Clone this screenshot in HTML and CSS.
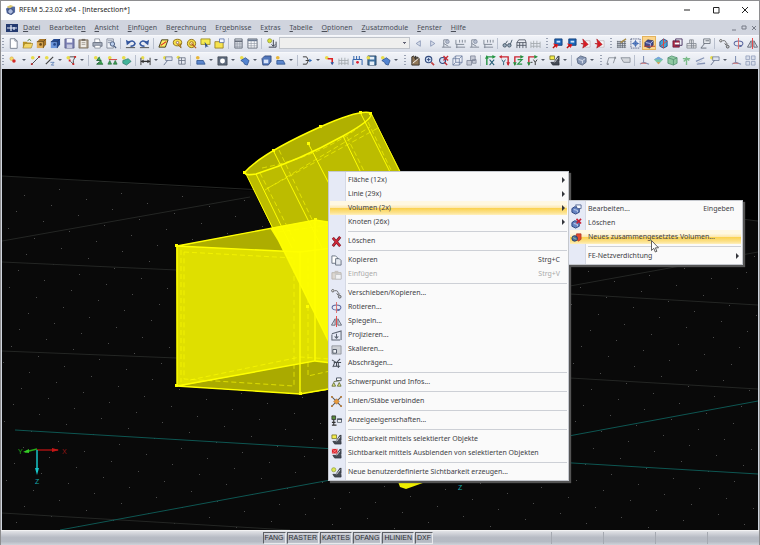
FILE: index.html
```html
<!DOCTYPE html>
<html lang="de">
<head>
<meta charset="utf-8">
<title>RFEM 5.23.02 x64 - [intersection*]</title>
<link rel="stylesheet" href="styles.css">
</head>
<body>
<svg class="sprite" aria-hidden="true">
  <symbol id="i-app" viewBox="0 0 12 12"><path d="M1 4 5 1l6 1v6l-4 3-5-2z" fill="#5068a0"/><path d="M2 2 6 0l3 1-4 3z" fill="#d9c46a"/><circle cx="6" cy="7" r="3" fill="#aab9dd" stroke="#2f4170"/></symbol>
  <symbol id="i-new" viewBox="0 0 12 12"><path d="M2.500.8h5l2.500 2.500v8h-7.500z" fill="#fff" stroke="#6b7383" stroke-width=".9"/><path d="M7.500.8v2.500H10" fill="none" stroke="#6b7383" stroke-width=".8"/></symbol>
  <symbol id="i-open" viewBox="0 0 12 12"><path d="M1 4h4l1 1h4v6H1z" fill="#b89425"/><path d="M1 11 3 6h9l-2 5z" fill="#f2d668" stroke="#94741b" stroke-width=".6"/><path d="M6 3q2-3 4 0" fill="none" stroke="#3b6b31"/></symbol>
  <symbol id="i-box" viewBox="0 0 12 12"><path d="M1 4 4 1h7v6l-3 4H1z" fill="#a87628"/><path d="M1 4h7v7H1z" fill="#e0ad55"/><path d="M1 4h7v7M8 4l3-3" fill="none" stroke="#5d4218" stroke-width=".8"/><circle cx="5" cy="7" r="1.500" fill="#6b4b1a"/></symbol>
  <symbol id="i-boxb" viewBox="0 0 12 12"><path d="M1 4 4 1h7v6l-3 4H1z" fill="#23488f"/><path d="M1 4h7v7H1z" fill="#6d97dc"/><path d="M1 4h7v7M8 4l3-3" fill="none" stroke="#1b3467" stroke-width=".8"/><circle cx="5" cy="7" r="1.500" fill="#25488b"/></symbol>
  <symbol id="i-save" viewBox="0 0 12 12"><path d="M1 1h10v10H1z" fill="#7b80b4" stroke="#515582" stroke-width=".8"/><path d="M3 1h6v4H3z" fill="#f4f5fb"/><path d="M3 7h6v4H3z" fill="#c5c8df"/></symbol>
  <symbol id="i-clip" viewBox="0 0 12 12"><path d="M1 2h10v9H1z" fill="#a99c8a" stroke="#74695b" stroke-width=".8"/><path d="M3 3h6v7H3z" fill="#efece6"/><path d="M4 1h4v2H4z" fill="#71695f"/><path d="M4 5h4M4 7h4" stroke="#8a8378" stroke-width=".7"/></symbol>
  <symbol id="i-print" viewBox="0 0 12 12"><path d="M3 1h5l1 4H3z" fill="#fff" stroke="#6b7383" stroke-width=".7"/><path d="M1 5h10v4H1z" fill="#a7afbd" stroke="#596273" stroke-width=".8"/><path d="M3 8h6v3H3z" fill="#fff" stroke="#6b7383" stroke-width=".7"/></symbol>
  <symbol id="i-preview" viewBox="0 0 12 12"><path d="M1 1h7v10H1z" fill="#eef1f7" stroke="#6b7383" stroke-width=".8"/><path d="M2 3h5M2 5h3" stroke="#8993a6"/><circle cx="7" cy="6.500" r="2.400" fill="#b9cdec" stroke="#475a7c"/><path d="m9 8.500 2 2.500" stroke="#475a7c" stroke-width="1.300"/></symbol>
  <symbol id="i-undo" viewBox="0 0 12 12"><path d="M3 5q6-4 8 1-1 3-5 3" fill="none" stroke="#34579e" stroke-width="1.600"/><path d="m1 2 1 6 4-3z" fill="#34579e"/><path d="M1 10.500h10" stroke="#333" stroke-width=".9"/></symbol>
  <symbol id="i-redo" viewBox="0 0 12 12"><path d="M9 5Q3 1 1 6q1 3 5 3" fill="none" stroke="#34579e" stroke-width="1.600"/><path d="m11 2-1 6-4-3z" fill="#34579e"/><path d="M1 10.500h10" stroke="#333" stroke-width=".9"/></symbol>
  <symbol id="i-plane" viewBox="0 0 12 12"><path d="M4 2h7L8 10H1z" fill="#f8ed66" stroke="#3c3510"/><path d="m3 8 6-4" stroke="#d22" stroke-width="1.200"/></symbol>
  <symbol id="i-talk" viewBox="0 0 12 12"><ellipse cx="6" cy="5" rx="4.600" ry="3.600" fill="#f5df48" stroke="#8a6c12"/><path d="m6 7 4 4-1-5" fill="#d38f23" stroke="#7a5913" stroke-width=".7"/><circle cx="6" cy="5" r="1.300" fill="#fff" stroke="#965"/></symbol>
  <symbol id="i-target" viewBox="0 0 12 12"><circle cx="6" cy="6" r="4.500" fill="#f5df48" stroke="#8a6c12"/><circle cx="6" cy="6" r="2" fill="#fff3a8" stroke="#a06d1c"/><path d="m6 6 5 5" stroke="#b45b21" stroke-width="1.300"/></symbol>
  <symbol id="i-flag" viewBox="0 0 12 12"><path d="M1 1h10v6H1z" fill="#f5ea50" stroke="#8a7a12" stroke-width=".8"/><path d="m5 4 1 7 1.500-2 2 1z" fill="#2e4e86"/></symbol>
  <symbol id="i-folder" viewBox="0 0 12 12"><path d="M1 4h9v7H1z" fill="#f6e34e" stroke="#8a7112" stroke-width=".8"/><path d="M6 1h5v4H6z" fill="#f4f7ff" stroke="#4a62a0" stroke-width=".8"/></symbol>
  <symbol id="i-calc" viewBox="0 0 12 12"><path d="M2 1h8v10H2z" fill="#dde1e8" stroke="#59616f" stroke-width=".9"/><path d="M2 3.500h8" stroke="#59616f" stroke-width="1.500"/><path d="M4.500 4v7M7.500 4v7M2 6.500h8M2 9h8" stroke="#808895" stroke-width=".6"/></symbol>
  <symbol id="i-table" viewBox="0 0 12 12"><path d="M1 1h10v10H1z" fill="#f8f9fb" stroke="#59616f" stroke-width=".9"/><path d="M1 2.500h10" stroke="#68778f" stroke-width="2"/><path d="M4.500 3v8M8 3v8M1 6h10M1 8.500h10" stroke="#929aa6" stroke-width=".7"/></symbol>
  <symbol id="i-load" viewBox="0 0 12 12"><circle cx="4" cy="3" r="2.300" fill="#d6df35" stroke="#798122" stroke-width=".6"/><path d="M3 10h8M8 2v7m-2-2 2 2 2-2M11 4v6" fill="none" stroke="#333a49"/></symbol>
  <symbol id="i-prev" viewBox="0 0 12 12"><path d="M8 3 3.500 6 8 9z" fill="#d8deea" stroke="#7988ac" stroke-width=".8"/></symbol>
  <symbol id="i-next" viewBox="0 0 12 12"><path d="m4 3 4.500 3L4 9z" fill="#d8deea" stroke="#7988ac" stroke-width=".8"/></symbol>
  <symbol id="i-gload" viewBox="0 0 12 12"><path d="M1 10h10M3 10V2h5M3 6l5 3" fill="none" stroke="#7d8593"/><circle cx="7" cy="4" r="2" fill="#b7bfd0" stroke="#747e95" stroke-width=".7"/></symbol>
  <symbol id="i-gdim" viewBox="0 0 12 12"><path d="M1 2v5M5 2v3M8 2v3M11 2v3M2 7v4M1 10h10M1 7h9" fill="none" stroke="#7d8593"/></symbol>
  <symbol id="i-frame" viewBox="0 0 12 12"><path d="M1 11V5h10v6M1 5l2-3h7l1 3M4 5v6M7.500 5v6M1 8h10" fill="none" stroke="#49505e" stroke-width=".9"/></symbol>
  <symbol id="i-gframe" viewBox="0 0 12 12"><path d="M1 11V4M11 11V4M4 3v8M7.500 3v8M1 6h10M1 9h10" fill="none" stroke="#a1a7ac" stroke-width=".9"/></symbol>
  <symbol id="i-glasses" viewBox="0 0 12 12"><circle cx="3" cy="8" r="1.900" fill="#9ab" stroke="#456"/><circle cx="8" cy="8" r="1.900" fill="#9ab" stroke="#456"/><path d="m4 6 2-3m3 4 2-5" stroke="#456"/></symbol>
  <symbol id="i-solid" viewBox="0 0 12 12"><path d="M3 1h8v7H3z" fill="#1c66b7" stroke="#123b76" stroke-width=".9"/><path d="M5 3h4v2H5z" fill="#cfe5fb"/><path d="m1 6 6 1-2 4z" fill="#e22"/><path d="M1 11 5 7" stroke="#b11" stroke-width="1.500"/></symbol>
  <symbol id="i-pdf" viewBox="0 0 12 12"><path d="M6 3h5v7H6z" fill="#f7f7f9" stroke="#b8a9ac" stroke-width=".7"/><path d="m3 1 6 6-6 4 1-4-3-1h3z" fill="#d91c24" stroke="#a5141b" stroke-width=".6"/></symbol>
  <symbol id="i-grid" viewBox="0 0 12 12"><path d="M1 4h10M1 6h10M1 8h10M1 10h10M2 3v8M4.500 3v8M7 3v8M9.500 3v8" stroke="#5b616b" stroke-width=".8"/><path d="m5 5 6-4" stroke="#a68a45" stroke-width="1.500"/></symbol>
  <symbol id="i-snap" viewBox="0 0 12 12"><path d="M1 1v10M11 1v10M1 1h10M1 11h10" stroke="#333e68" stroke-dasharray="1 1"/><circle cx="6" cy="6" r="2" fill="#bcd1f3" stroke="#2b57a7"/><path d="M6 2v8M2 6h8" stroke="#2b57a7" stroke-width=".7"/></symbol>
  <symbol id="i-cubes" viewBox="0 0 12 12"><path d="m1 5 3-3 6 1v5L6 11 1 9z" fill="#424b8e" stroke="#252c52" stroke-width=".7"/><path d="m2 5 5 1v4M7 6l3-3" fill="none" stroke="#bac5ed"/><path d="M0 9h12" stroke="#b63c2e"/></symbol>
  <symbol id="i-cubec" viewBox="0 0 12 12"><path d="M2 4 6 1l4 2v6L6 11 2 9z" fill="#42a5d7" stroke="#1f447c" stroke-width=".9"/><path d="m3 9 7-6M6 1v10" stroke="#e7443c"/></symbol>
  <symbol id="i-cuber" viewBox="0 0 12 12"><path d="M1 3h7v7H1z" fill="#b02a42" stroke="#5e1a40" stroke-width=".8"/><path d="M4 1h7v7H4z" fill="none" stroke="#47315f"/><path d="M3 5h5v2H3z" fill="#fff"/></symbol>
  <symbol id="i-tower" viewBox="0 0 12 12"><path d="M1 11h10V6H8V2H4v4H1zM4 6h4v5M6 2v9M1 8.500h10" fill="#e1e3e6" stroke="#797f88" stroke-width=".8"/></symbol>
  <symbol id="i-note" viewBox="0 0 12 12"><path d="M4 1h7v5H4z" fill="#e8ebef" stroke="#666d78" stroke-width=".9"/><path d="M1 11 5 6M1 11h6M6 3h4" stroke="#666d78"/></symbol>
  <symbol id="i-move" viewBox="0 0 12 12"><circle cx="2" cy="3" r="1.300" fill="#fff" stroke="#555"/><path d="M4 3q4-1 4 4m-2-1 2 2 1.500-2" fill="none" stroke="#555" stroke-width=".9"/><circle cx="9.500" cy="9.500" r="1.500" fill="#c8cbd3" stroke="#555"/></symbol>
  <symbol id="i-rotate" viewBox="0 0 12 12"><ellipse cx="6" cy="6" rx="4.800" ry="2.800" fill="none" stroke="#59659c" stroke-width="1.100"/><path d="M6 0v12" stroke="#db6868"/><path d="m7 7 3 2-3 1z" fill="#59659c"/></symbol>
  <symbol id="i-mirror" viewBox="0 0 12 12"><path d="M4.500 3v7h-4zM7.500 3v7h4z" fill="#d9dbe2" stroke="#555c6b" stroke-width=".9"/><path d="M6 0v12" stroke="#e23c3c"/></symbol>
  <symbol id="i-project" viewBox="0 0 12 12"><path d="M1 4 11 1v10M1 5v6h9M6 4v5m-2-2 2 2 2-2" fill="none" stroke="#5b6371" stroke-width="1.100"/></symbol>
  <symbol id="i-scale" viewBox="0 0 12 12"><path d="M1 2h10v9H1z" fill="#cdd0d5" stroke="#82878e" stroke-width=".8"/><path d="M2 6h4v4H2z" fill="#eef0f4" stroke="#4b5362"/></symbol>
  <symbol id="i-shear" viewBox="0 0 12 12"><path d="m1 2 5 3 4-4M3 5h8M4 5l-2 5M8 5v6M3 9h7M6 5v4" fill="none" stroke="#454b55" stroke-width="1.100"/></symbol>
  <symbol id="i-centroid" viewBox="0 0 12 12"><path d="M6 1h5v3H6z" fill="#fff" stroke="#46505e"/><path d="m1 10 2-4 2 4zM7 10l2-4 2 4zM3 5l6-1" fill="#edf087" stroke="#57622d" stroke-width=".9"/></symbol>
  <symbol id="i-connect" viewBox="0 0 12 12"><path d="m1 1 10 10M11 1 1 11" stroke="#555" stroke-width="1.100"/><path d="m6 3 3 3-3 3-3-3z" fill="#e79b3e" stroke="#a75b17" stroke-width=".6"/><path d="M0 0h2v2H0zM10 0h2v2h-2zM0 10h2v2H0zM10 10h2v2h-2z" fill="#b87f3f"/></symbol>
  <symbol id="i-props" viewBox="0 0 12 12"><path d="M1 1h4v4H1z" fill="#5a8d3c" stroke="#333" stroke-width=".9"/><path d="M3 5v6M1 8h4M1 11h5" stroke="#333" stroke-width="1.200"/><path d="M7 4h4.500v4H7z" fill="#fff" stroke="#35404f" stroke-width=".8"/><path d="M7 5h5" stroke="#35404f"/></symbol>
  <symbol id="i-vis" viewBox="0 0 12 12"><path d="M1 1h5v4H1z" fill="#f5ed4c" stroke="#6b6922" stroke-width=".8"/><path d="M10 1 6 7h5V1M2 8h9v3H4z" fill="#454b55" stroke="#252a33" stroke-width=".7"/><path d="m6 8 4-5" stroke="#dfe2e5"/></symbol>
  <symbol id="i-visx" viewBox="0 0 12 12"><path d="M10 1 6 7h5V1M2 8h9v3H4z" fill="#454b55" stroke="#252a33" stroke-width=".7"/><path d="M1 1h6v5H1z" fill="#d8222c"/><path d="m1 1 6 5m0-5L1 6" stroke="#ff8b8b" stroke-width=".8"/><path d="m6 8 4-5" stroke="#dfe2e5"/></symbol>
  <symbol id="i-visn" viewBox="0 0 12 12"><circle cx="3" cy="3" r="2.300" fill="#dce752" stroke="#899631" stroke-width=".7"/><path d="M10 1 6 7h5V1M2 8h9v3H4z" fill="#454b55" stroke="#252a33" stroke-width=".7"/><path d="m6 8 4-5" stroke="#dfe2e5"/></symbol>
  <symbol id="i-delete" viewBox="0 0 12 12"><path d="m2 2 8 9M10 1 2 11" stroke="#651c28" stroke-width="3"/><path d="m2 2 8 9M10 1 2 11" stroke="#cf2739" stroke-width="1.800"/></symbol>
  <symbol id="i-copy" viewBox="0 0 12 12"><path d="M1 1h4l2 2v6H1z" fill="#fff" stroke="#596373" stroke-width=".9"/><path d="M5 4h4l2 2v5H5z" fill="#e4e8ef" stroke="#596373" stroke-width=".9"/></symbol>
  <symbol id="i-paste" viewBox="0 0 12 12"><path d="M1 4h10v7H1z" fill="#dcd7d0" stroke="#b6b1aa" stroke-width=".9"/><path d="M4 2h4v3H4z" fill="#c6c2be"/><path d="M5 6h6v5H5z" fill="#f2f2f3" stroke="#b5b8bd" stroke-width=".7"/></symbol>
  <symbol id="i-vol" viewBox="0 0 12 12"><path d="m1 5 3-2 5 1v5l-4 2-4-2z" fill="#6683c2" stroke="#263e7a"/><path d="M5 1h6v4H7z" fill="#f7f8fd" stroke="#344b80" stroke-width=".8"/><path d="m3 6 4 1v2" fill="none" stroke="#c7d4f0"/></symbol>
  <symbol id="i-volx" viewBox="0 0 12 12"><path d="m1 5 3-2 5 1v5l-4 2-4-2z" fill="#6683c2" stroke="#263e7a"/><path d="m6 1 5 5m0-5L6 6" stroke="#c91f35" stroke-width="1.700"/><path d="m3 6 4 1v2" fill="none" stroke="#c7d4f0"/></symbol>
  <symbol id="i-voln" viewBox="0 0 12 12"><path d="M6 2h5v6l-3 2-3-3z" fill="#e44b2e" stroke="#9c2b20" stroke-width=".7"/><circle cx="4" cy="7" r="3" fill="#4c6fa6" stroke="#243e59"/><path d="m2 6 4 2" stroke="#9dc48b"/></symbol>
  <symbol id="i-node" viewBox="0 0 12 12"><circle cx="4" cy="4" r="2" fill="#f5da6b" stroke="#cf9e33" stroke-width=".5"/><circle cx="6.500" cy="6.500" r="1.900" fill="#d32c28"/></symbol>
  <symbol id="i-line" viewBox="0 0 12 12"><circle cx="3" cy="3" r="2" fill="#e7dc4a"/><path d="m2 10 8-8" stroke="#444"/><path d="M1 9h2v2H1zM9 1h2v2H9z" fill="#b32c2c"/></symbol>
  <symbol id="i-member" viewBox="0 0 12 12"><circle cx="3" cy="3" r="2" fill="#e7dc4a"/><path d="m2 10 8-8" stroke="#444" stroke-width="1.300"/><path d="M7 8h4L8 11h3" fill="none" stroke="#456eaa" stroke-width=".8"/></symbol>
  <symbol id="i-rline" viewBox="0 0 12 12"><circle cx="2.500" cy="3" r="2" fill="#e7dc4a"/><path d="M4 2h6L8 6v4L5 7" fill="none" stroke="#444"/><path d="M9 1h2v2H9zM7 9h2v2H7zM3 5h2v2H3z" fill="#d92525"/></symbol>
  <symbol id="i-support" viewBox="0 0 12 12"><circle cx="3" cy="3" r="2" fill="#e7dc4a"/><path d="M7 2 4 6h5L4 10h7" fill="#3ca352" stroke="#236437"/></symbol>
  <symbol id="i-support2" viewBox="0 0 12 12"><circle cx="3" cy="3" r="2" fill="#e7dc4a"/><path d="M2 5h9" stroke="#c33"/><path d="m1 10 2-4 2 4zM7 10l2-4 2 4z" fill="#3ca352" stroke="#236437" stroke-width=".7"/></symbol>
  <symbol id="i-surf" viewBox="0 0 12 12"><circle cx="3" cy="3" r="2" fill="#e7dc4a"/><path d="m2 6 6-2 3 3-5 4-4-2z" fill="#42b49a" stroke="#276c61" stroke-width=".7"/></symbol>
  <symbol id="i-dim" viewBox="0 0 12 12"><circle cx="3" cy="3" r="1.800" fill="#e7dc4a"/><path d="M1 3v8M11 3v8" stroke="#333"/><path d="M1 7h10" stroke="#333" stroke-width="1.400"/><path d="m1 7 3-2v4zM11 7 8 5v4z" fill="#333"/></symbol>
  <symbol id="i-net" viewBox="0 0 12 12"><circle cx="2.500" cy="2.500" r="1.800" fill="#e7dc4a"/><path d="M3 3h7v7H3zM3 6h7M6 3v7" fill="none" stroke="#6b7384" stroke-width=".9"/></symbol>
  <symbol id="i-sheet" viewBox="0 0 12 12"><circle cx="3" cy="3" r="2" fill="#e7b63a"/><path d="M2 6h7l2 4H2z" fill="#5c87cd" stroke="#274b86" stroke-width=".8"/></symbol>
  <symbol id="i-hole" viewBox="0 0 12 12"><path d="M1 2h10v9H1z" fill="#5f6b7d" stroke="#3c444f" stroke-width=".8"/><circle cx="6" cy="6.500" r="2.700" fill="#fff"/></symbol>
  <symbol id="i-bend" viewBox="0 0 12 12"><circle cx="3" cy="3" r="2" fill="#e7dc4a"/><path d="m2 6 5-3 4 3-2 5-3-1-1-2z" fill="#5384d0" stroke="#264a88" stroke-width=".8"/></symbol>
  <symbol id="i-cube" viewBox="0 0 12 12"><path d="m1 4 3-3h7v6L8 11H2z" fill="#5176ba" stroke="#263e70" stroke-width=".8"/><path d="M3 5h5v4H3z" fill="#d9e5fa"/></symbol>
  <symbol id="i-gcube" viewBox="0 0 12 12"><path d="m1 4 4-3 6 2v5l-4 3-5-2z" fill="#8797b4" stroke="#4a5975" stroke-width=".8"/><path d="m3 5 4 1v3M7 6l3-2" fill="none" stroke="#dfe6f2"/></symbol>
  <symbol id="i-joint" viewBox="0 0 12 12"><path d="M1 2h4l2 4-2 4H1M4 6h4" fill="none" stroke="#333"/><path d="m8 4 3 2-3 2z" fill="#2b69b8"/></symbol>
  <symbol id="i-beamr" viewBox="0 0 12 12"><circle cx="3" cy="3" r="2" fill="#e7dc4a"/><path d="M4 4h5v6" fill="none" stroke="#d22" stroke-width="1.700"/><path d="m7 8 2 3 2-3z" fill="#245ca8"/></symbol>
  <symbol id="i-loads" viewBox="0 0 12 12"><path d="M1 5h10M1 5v6M11 5v6M2 1v4M5 1v4M8 1v4" stroke="#3365ad" stroke-width="1.100"/><circle cx="6" cy="8" r="1.500" fill="#d23"/></symbol>
  <symbol id="i-disk" viewBox="0 0 12 12"><path d="M2 1h9v10H2z" fill="#3f709f" stroke="#213b59" stroke-width=".8"/><path d="M4 2h5v3H4zM4 7h5v4H4z" fill="#e6eff8"/><circle cx="2.500" cy="3" r="2" fill="#e7dc4a"/></symbol>
  <symbol id="i-zoom" viewBox="0 0 12 12"><circle cx="5" cy="5" r="3.500" fill="#d1e1f7" stroke="#344c7e" stroke-width="1.200"/><path d="m8 8 3 3" stroke="#c24040" stroke-width="1.700"/><path d="M3 5h4M5 3v4" stroke="#344c7e"/></symbol>
  <symbol id="i-zoomx" viewBox="0 0 12 12"><circle cx="5" cy="6" r="3.300" fill="#d1e1f7" stroke="#344c7e" stroke-width="1.200"/><path d="m7 8 3 3M6 1l5 5m0-5L6 6" stroke="#c82d35" stroke-width="1.500"/></symbol>
  <symbol id="i-wire" viewBox="0 0 12 12"><path d="M1 4h7v7H1zM4 1h7v7M1 4l3-3v7h7M8 4l3-3M8 11l3-3M1 11l3-3" fill="#eef2fa" fill-opacity=".6" stroke="#637598" stroke-width=".8"/></symbol>
  <symbol id="i-gcubes" viewBox="0 0 12 12"><path d="M5 1h5v5H5zM1 6h5v5H1zM7 5h4v4H7z" fill="#c6cad6" stroke="#767e91" stroke-width=".8"/></symbol>
  <symbol id="i-hand" viewBox="0 0 12 12"><path d="M2 2v9h8V4L8 2v3L6 1v4L4 1z" fill="#8f7656" stroke="#37312b"/><path d="m3 9 6-5" stroke="#fff"/></symbol>
  <symbol id="i-vx" viewBox="0 0 12 12"><path d="M2 11V2h8" fill="none" stroke="#259443" stroke-width="1.500"/><path d="m0 4 2-4 2 4zM8 0l4 2-4 2z" fill="#259443"/><path d="m5 5 5 6m0-6-5 6" stroke="#265f76" stroke-width="1.100"/></symbol>
  <symbol id="i-vy" viewBox="0 0 12 12"><path d="M2 2h8v9" fill="none" stroke="#ca2630" stroke-width="1.500"/><path d="m3 0-3 2 3 2zM8 8l2 4 2-4z" fill="#ca2630"/><path d="m3 5 2 3 2-3M5 8v3" fill="none" stroke="#265f76"/></symbol>
  <symbol id="i-vz" viewBox="0 0 12 12"><path d="M2 11V2h8" fill="none" stroke="#ca2630" stroke-width="1.500"/><path d="m8 0 4 2-4 2zM0 8l2 4 2-4z" fill="#259443"/><path d="M5 5h5l-5 5h5" fill="none" stroke="#259443" stroke-width="1.200"/></symbol>
  <symbol id="i-vny" viewBox="0 0 12 12"><path d="M2 11V2h8" fill="none" stroke="#ca2630" stroke-width="1.500"/><path d="m8 0 4 2-4 2zM0 8l2 4 2-4z" fill="#259443"/><path d="M4 8h2m1-3 2 3 2-3M9 8v3" fill="none" stroke="#333"/></symbol>
  <symbol id="i-gpoly" viewBox="0 0 12 12"><path d="m1 10 2-7h7L8 9" fill="none" stroke="#8a9099"/><path d="M1 9h2v2H1zM9 2h2v2H9z" fill="#8a9099"/></symbol>
  <symbol id="i-gtag" viewBox="0 0 12 12"><path d="M1 3h10v5H4z" fill="#d5d8dd" stroke="#8a9099"/></symbol>
  <symbol id="i-axes" viewBox="0 0 12 12"><path d="M5 1v7l6 2M5 8l-4 2" fill="none" stroke="#7c8cb0" stroke-width="1.100"/><path d="M2 9h6" stroke="#c66"/></symbol>
  <symbol id="i-rain" viewBox="0 0 12 12"><path d="m1 5 5-3 5 3-5 5z" fill="#7ac7a1"/><path d="m1 5 5-3 5 3z" fill="#77a4e0"/><path d="m4 8 2 2 2-2z" fill="#e89b4d"/></symbol>
  <symbol id="i-gbox" viewBox="0 0 12 12"><path d="m1 3 4-2 6 2v6l-4 2-6-2z" fill="#8fc9a2" stroke="#4c8c69" stroke-width=".8"/><path d="m1 3 6 2v6M7 5l4-2" fill="none" stroke="#4c8c69" stroke-width=".8"/></symbol>
  <symbol id="i-tree" viewBox="0 0 12 12"><path d="M6 11V2M2 4h8M3 7l3-3 3 2" fill="none" stroke="#7cbc8b" stroke-width="1.500"/></symbol>
  <symbol id="i-slab" viewBox="0 0 12 12"><path d="m1 7 9-4M2 10l9-1" stroke="#8694b5" stroke-width="1.400"/><path d="m2 9 6-3" stroke="#c1c7d6"/></symbol>
  <symbol id="i-fade" viewBox="0 0 12 12"><path d="M1 1h4v4H1zM7 1h4v4H7zM1 7h4v4H1zM7 7h4v4H7z" fill="#d9dfeb" stroke="#8a97b5" stroke-width=".8"/></symbol>
  <symbol id="i-label" viewBox="0 0 12 12"><circle cx="3" cy="3" r="1.800" fill="#e7dc4a"/><path d="M4 2h7v4H4z" fill="#dde3ef" stroke="#64718c" stroke-width=".8"/><path d="m2 11 4-5" stroke="#64718c"/></symbol>
</svg>

<div class="window">
  <header class="titlebar">
    <svg class="icon"><use href="#i-app"/></svg>
    <h1>RFEM 5.23.02 x64 - [intersection*]</h1>
    <div class="winctl">
      <button type="button" aria-label="Minimieren"><svg viewBox="0 0 8 8"><path d="M1 4h6"/></svg></button>
      <button type="button" aria-label="Maximieren"><svg viewBox="0 0 8 8"><path d="M1.500 1.500h5.500v5.500h-5.500z"/></svg></button>
      <button type="button" aria-label="Schließen"><svg viewBox="0 0 8 8"><path d="m1 1 6 6m0-6L1 7"/></svg></button>
    </div>
  </header>

  <nav class="menubar">
    <svg class="childicon" viewBox="0 0 12 10"><path d="M0 1h12v8H0z" fill="#243a70"/><path d="M1 5h10M5 2v6M8 4v3" stroke="#e8eefb" stroke-width="1.200"/></svg>
    <ul>
      <li><button type="button"><u>D</u>atei</button></li>
      <li><button type="button">Bearbeite<u>n</u></button></li>
      <li><button type="button"><u>A</u>nsicht</button></li>
      <li><button type="button"><u>E</u>infügen</button></li>
      <li><button type="button">Be<u>r</u>echnung</button></li>
      <li><button type="button">Er<u>g</u>ebnisse</button></li>
      <li><button type="button">E<u>x</u>tras</button></li>
      <li><button type="button"><u>T</u>abelle</button></li>
      <li><button type="button"><u>O</u>ptionen</button></li>
      <li><button type="button"><u>Z</u>usatzmodule</button></li>
      <li><button type="button"><u>F</u>enster</button></li>
      <li><button type="button"><u>H</u>ilfe</button></li>
    </ul>
    <div class="childctl">
      <button type="button" aria-label="Fenster minimieren"><svg viewBox="0 0 6 6"><path d="M1 5h4"/></svg></button>
      <button type="button" aria-label="Fenster wiederherstellen"><svg viewBox="0 0 6 6"><path d="M1 4V1h4v3z"/></svg></button>
      <button type="button" aria-label="Fenster schließen"><svg viewBox="0 0 6 6"><path d="m1 1 4 4m0-4L1 5"/></svg></button>
    </div>
  </nav>

  <div class="toolbar">
    <div class="tools" data-tools="| new open box boxb save clip print preview / undo redo / plane talk target flag folder / calc table / load"></div>
    <select class="loadcase" aria-label="Lastfall"><option></option></select>
    <div class="tools" data-tools="prev next gload gdim gload gdim / glasses frame gframe | solid solid pdf pdf | grid snap *cubes cubec cuber tower note / move rotate mirror"></div>
  </div>
  <div class="toolbar">
    <div class="tools" data-tools="| node v line member v rline v / support support2 surf / dim v label net / sheet v hole v bend v cube sheet v / joint v beamr gframe loads disk bend v | hand zoom zoomx wire gcubes / vx vy vz vny v vis v / gcube v | gpoly gtag / axes rain gbox tree slab label v axes fade"></div>
  </div>

  <main class="viewport">
    <svg class="scene" viewBox="2 69 756 461" preserveAspectRatio="xMinYMin slice" aria-label="Modell">
      <path d="M2 176 758 221V530H2z" fill="#090909"/>
      <g id="raster" fill="#4c4c4c"></g>
      <path d="M2 176 300 192M2 241 250 197M2 262 177 270M2 351 177 358M2 513 290 530M570 286 758 252M570 294 758 305M570 378 758 389M740 219 758 221" fill="none" stroke="#242624"/>
      <path d="M15 430 758 474M60 530 758 401" fill="none" stroke="#0e5652"/>

      <path d="M176 246 315 220 340 224 340 388 300 394 177 386z" fill="#adad00"/>
      <path d="M177 246 300 252 340 247V388L300 394 177 386z" fill="#dfdf00"/>
      <path d="M180 386 315 361 340 364V388L300 394z" fill="#aaaa00"/>
      <path d="M245 172Q262 153 320 127 360 109 371 113L410 190 340 364 278 240z" fill="#bcbc00"/>
      <path d="M245 172Q265 151 320 127 360 109 371 113 374 119 343 136 300 160 256 174z" fill="#b0b000"/>
      <path d="M270 228 315 220 340 223V366L278 241z" fill="#fbfb00"/>
      <path d="M397 479 400 487 406 489 434 479z" fill="#eeee00"/>
      <g fill="none" stroke="#ffff00">
        <path d="M245 172Q262 153 320 127 360 109 371 113 374 119 343 136 300 160 256 174 244 176 245 172z" stroke-width="1.500"/>
        <path d="M245 172 340 364M256 174 292 248M273 150 322 248M308 143 340 205M343 136 362 175M360 112 390 172M371 113 400 172"/>
        <path d="M177 246V386L300 394V252L177 246 315 220V361L177 386M300 394 340 387M300 252 340 247M315 220 340 224M315 361 340 364" stroke-width="1.400"/>
        <path d="M260 173 295 242M279 150 318 232M347 137 366 175M368 122 392 172M265 190 370 127M268 188 378 128M184 252 294 258V386L184 379zM308 258V376L330 371M181 250V382M190 380 300 357 330 359M278 232 330 225M262 168Q318 157 358 128" stroke-dasharray="5 3" stroke-width=".8" opacity=".75"/>
      </g>
      <path d="M175 244h3v3h-3zM243 171h3v3h-3zM272 149h3v3h-3zM319 125h3v3h-3zM307 142h3v3h-3zM359 111h3v3h-3zM369 112h3v3h-3zM175 384h3v3h-3zM299 392h3v3h-3zM314 218h3v3h-3zM306 305h3v3h-3z" fill="#ffff00"/>

      <path d="M37 450H58" stroke="#a31212" stroke-width="1.500"/><path d="m52 448 7 2-7 2z" fill="#c41515"/>
      <path d="M37 449 25 452" stroke="#27a81b" stroke-width="1.500"/><path d="m29 449-6 3 6 1z" fill="#35cc26"/>
      <path d="M37 450V472" stroke="#17c6c9" stroke-width="1.500"/><path d="m35 468 2 7 2-7z" fill="#17c6c9"/>
      <text x="62" y="454" fill="#941414">X</text>
      <text x="18" y="454" fill="#27a81b">Y</text>
      <text x="35" y="484" fill="#17a8ac">Z</text>
      <text x="458" y="490" fill="#17a8ac">Z</text>
    </svg>

    <div class="popup contextmenu" role="menu">
      <button type="button" role="menuitem"><i></i><span>Fläche (12x)</span><b></b></button>
      <button type="button" role="menuitem"><i></i><span>Linie (29x)</span><b></b></button>
      <button type="button" role="menuitem" class="active"><i></i><span>Volumen (2x)</span><b></b></button>
      <button type="button" role="menuitem"><i></i><span>Knoten (26x)</span><b></b></button>
      <hr>
      <button type="button" role="menuitem"><svg class="icon"><use href="#i-delete"/></svg><span>Löschen</span></button>
      <hr>
      <button type="button" role="menuitem"><svg class="icon"><use href="#i-copy"/></svg><span>Kopieren</span><kbd>Strg+C</kbd></button>
      <button type="button" role="menuitem" disabled><svg class="icon"><use href="#i-paste"/></svg><span>Einfügen</span><kbd>Strg+V</kbd></button>
      <hr>
      <button type="button" role="menuitem"><svg class="icon"><use href="#i-move"/></svg><span>Verschieben/Kopieren...</span></button>
      <button type="button" role="menuitem"><svg class="icon"><use href="#i-rotate"/></svg><span>Rotieren...</span></button>
      <button type="button" role="menuitem"><svg class="icon"><use href="#i-mirror"/></svg><span>Spiegeln...</span></button>
      <button type="button" role="menuitem"><svg class="icon"><use href="#i-project"/></svg><span>Projizieren...</span></button>
      <button type="button" role="menuitem"><svg class="icon"><use href="#i-scale"/></svg><span>Skalieren...</span></button>
      <button type="button" role="menuitem"><svg class="icon"><use href="#i-shear"/></svg><span>Abschrägen...</span></button>
      <hr>
      <button type="button" role="menuitem"><svg class="icon"><use href="#i-centroid"/></svg><span>Schwerpunkt und Infos...</span></button>
      <hr>
      <button type="button" role="menuitem"><svg class="icon"><use href="#i-connect"/></svg><span>Linien/Stäbe verbinden</span></button>
      <hr>
      <button type="button" role="menuitem"><svg class="icon"><use href="#i-props"/></svg><span>Anzeigeeigenschaften...</span></button>
      <hr>
      <button type="button" role="menuitem"><svg class="icon"><use href="#i-vis"/></svg><span>Sichtbarkeit mittels selektierter Objekte</span></button>
      <button type="button" role="menuitem"><svg class="icon"><use href="#i-visx"/></svg><span>Sichtbarkeit mittels Ausblenden von selektierten Objekten</span></button>
      <hr>
      <button type="button" role="menuitem"><svg class="icon"><use href="#i-visn"/></svg><span>Neue benutzerdefinierte Sichtbarkeit erzeugen...</span></button>
    </div>

    <div class="popup submenu" role="menu">
      <button type="button" role="menuitem"><svg class="icon"><use href="#i-vol"/></svg><span>Bearbeiten...</span><kbd>Eingeben</kbd></button>
      <button type="button" role="menuitem"><svg class="icon"><use href="#i-volx"/></svg><span>Löschen</span></button>
      <button type="button" role="menuitem" class="active"><svg class="icon"><use href="#i-voln"/></svg><span>Neues zusammengesetztes Volumen...</span></button>
      <hr>
      <button type="button" role="menuitem"><i></i><span>FE-Netzverdichtung</span><b></b></button>
    </div>
    <svg class="cursor" viewBox="0 0 8 13"><path d="M.5.500v10l2.300-2.200 1.500 3.700 1.600-.7L4.400 7.800h3.100z" fill="#fff" stroke="#3c3c3c" stroke-width=".8"/></svg>
  </main>

  <footer class="statusbar">
    <div class="modes">
      <button type="button">FANG</button>
      <button type="button">RASTER</button>
      <button type="button">KARTES</button>
      <button type="button">OFANG</button>
      <button type="button">HLINIEN</button>
      <button type="button">DXF</button>
    </div>
    <div class="panes"><span></span><span></span><span></span><span></span></div>
  </footer>
</div>
<script src="app.js"></script>
</body>
</html>
```
FILE: styles.css
```css
* { box-sizing: border-box; }
body {
  margin: 0;
  font: 7px/14px "Noto Sans", "Open Sans", sans-serif;
  color: #414145;
}
button {
  margin: 0;
  padding: 0;
  border: 0;
  background: none;
  font: inherit;
  color: inherit;
}
.sprite { position: absolute; width: 0; height: 0; }
.icon { width: 11px; height: 11px; flex: none; }

.window {
  display: flex;
  flex-direction: column;
  height: 100vh;
  border: 1px solid #8e8e90;
  border-bottom: 0;
  overflow: hidden;
  background: #d0d5de;
}

.titlebar {
  display: flex;
  align-items: center;
  height: 19px;
  padding: 0 0 1px 4px;
  gap: 3px;
  background: #fff;
  color: #1c1c1c;
}
.titlebar h1 { margin: 0; font-size: 7px; font-weight: 400; }
.winctl { display: flex; margin-left: auto; }
.winctl button { display: grid; place-items: center; width: 29px; height: 18px; }
.winctl svg { width: 8px; height: 8px; fill: none; stroke: #222; }

.menubar {
  display: flex;
  align-items: center;
  height: 15px;
  padding-left: 5px;
  background: #d0d4de;
  color: #4a4e58;
}
.childicon { width: 12px; height: 10px; }
.menubar ul { display: flex; gap: 9px; margin: 0; padding: 0 0 0 5px; list-style: none; }
.menubar li { display: flex; }
.menubar u { text-underline-offset: 1px; text-decoration-thickness: 1px; }
.childctl { display: flex; gap: 4px; margin-left: auto; padding-right: 2px; }
.childctl button { display: flex; }
.childctl svg { width: 6px; height: 6px; fill: none; stroke: #777b86; }

.toolbar {
  display: flex;
  align-items: center;
  height: 17px;
  padding-bottom: 2px;
  overflow: hidden;
  border-top: 1px solid #f7f8fb;
  background: linear-gradient(#f1f3f8, #e4e8f0 60%, #d6dbe6);
}
.tools { display: flex; align-items: center; flex: none; }
.tools button { display: grid; place-items: center; width: 14px; height: 14px; }
.tools .hot { background: #fbd48a; box-shadow: inset 0 0 0 1px #e3b25c; }
.tools .drop { width: 8px; }
.tools .drop::before { content: ""; border: 2px solid transparent; border-top-color: #555b68; border-bottom: 0; }
.sep { width: 1px; height: 11px; margin: 0 2px; background: #b9c0ce; }
.grip { width: 2px; height: 10px; margin: 0 2px 0 4px; background: repeating-linear-gradient(#9aa2b3 0 1px, transparent 1px 3px); }
.grip:first-child { margin: 0 2px 0 1px; }
.loadcase {
  width: 137px;
  height: 12px;
  margin: 0 1px;
  padding: 0;
  appearance: none;
  border: 1px solid #bfc3ca;
  border-radius: 0;
  background: #efefee conic-gradient(from -45deg at 50% 100%, #667 90deg, transparent 0) no-repeat right 3px center / 4px 2px;
  background: #efefee conic-gradient(from -63deg at 50% 100%, transparent 126deg, transparent 0) no-repeat, #efefee;
  background-image: linear-gradient(#667, #667), linear-gradient(#667, #667);
  background-repeat: no-repeat;
  background-position: right 3px top 4px, right 4px top 5px;
  background-size: 3px 1px, 1px 1px;
  font: inherit;
}

.viewport { position: relative; flex: 1; min-height: 0; margin: 0 1px; background: #000; }
.scene { display: block; width: 100%; height: 100%; }
.scene text { font: 7px "Liberation Sans", sans-serif; }

.popup {
  position: absolute;
  padding: 1px;
  border: 1px solid #c5c8ce;
  background: linear-gradient(90deg, #e6eaf6 16px, #d5d9e4 16px 17px, #fafafa 17px);
  box-shadow: 2px 2px 1px #555;
}
.popup button {
  display: flex;
  align-items: center;
  gap: 6px;
  width: 100%;
  height: 14px;
  padding: 0 7px 0 1px;
  text-align: left;
  white-space: nowrap;
}
.popup i { width: 11px; }
.popup b {
  margin: 0 -5px 0 auto;
  border: 3px solid transparent;
  border-left-color: #34363c;
  border-right: 0;
}
.popup kbd { margin-left: auto; font: inherit; }
.popup hr { height: 1px; margin: 2px 0 2px 18px; border: 0; background: #cdd0d6; }
.popup .active {
  background: linear-gradient(#fff8e2 0 25%, #fce7ad 50%, #fbd250 52%, #fce392 85%, #fff0bd);
}
.popup button:disabled { color: #aaa; }
.contextmenu { left: 326px; top: 102px; width: 241px; }
.submenu { left: 566px; top: 131px; width: 175px; }
.cursor { position: absolute; left: 649px; top: 171px; width: 8px; height: 13px; }

.statusbar {
  display: flex;
  align-items: center;
  height: 15px;
  padding-left: 34.5%;
  border-top: 1px solid #f2f2f3;
  background: linear-gradient(#e2e3e7, #b7bbc4 45%, #b5bac3 75%, #d0d3da);
  font: 7px/10px "Liberation Sans", sans-serif;
  color: #2b2e33;
}
.modes { display: flex; gap: 1px; }
.modes button {
  height: 12px;
  padding: 0 1px;
  border: 1px solid;
  border-color: #5d6066 #e8e9ec #e8e9ec #5d6066;
}
.panes { display: flex; margin-left: auto; }
.panes span { width: 52px; height: 12px; border-left: 1px solid #a5a9b1; }
```
FILE: app.js
```js
const SVG = "http://www.w3.org/2000/svg";

// "|" grip, "/" separator, "v" drop-down arrow, "*" marks a pressed tool
document.querySelectorAll("[data-tools]").forEach((bar) => {
  bar.innerHTML = bar.dataset.tools.split(" ").map((t) => {
    if (t === "|") return '<span class="grip"></span>';
    if (t === "/") return '<span class="sep"></span>';
    if (t === "v") return '<button type="button" class="drop" aria-label="Mehr"></button>';
    const hot = t.startsWith("*");
    const name = t.replace("*", "");
    return `<button type="button"${hot ? ' class="hot"' : ""} aria-label="${name}"><svg class="icon"><use href="#i-${name}"/></svg></button>`;
  }).join("");
});

// Work-plane raster points, a skewed lattice below the horizon line
const raster = document.getElementById("raster");
for (let m = -25; m < 45; m++) {
  for (let n = -45; n < 30; n++) {
    const x = Math.round(76 + 26.6 * m - 8.3 * n);
    const y = Math.round(467 + 10 * m + 16.3 * n);
    if (x < 3 || x > 756 || y > 528 || y < 180 + x * 0.06) continue;
    const dot = document.createElementNS(SVG, "rect");
    dot.setAttribute("x", x);
    dot.setAttribute("y", y);
    dot.setAttribute("width", 1);
    dot.setAttribute("height", 1);
    raster.append(dot);
  }
}
```
